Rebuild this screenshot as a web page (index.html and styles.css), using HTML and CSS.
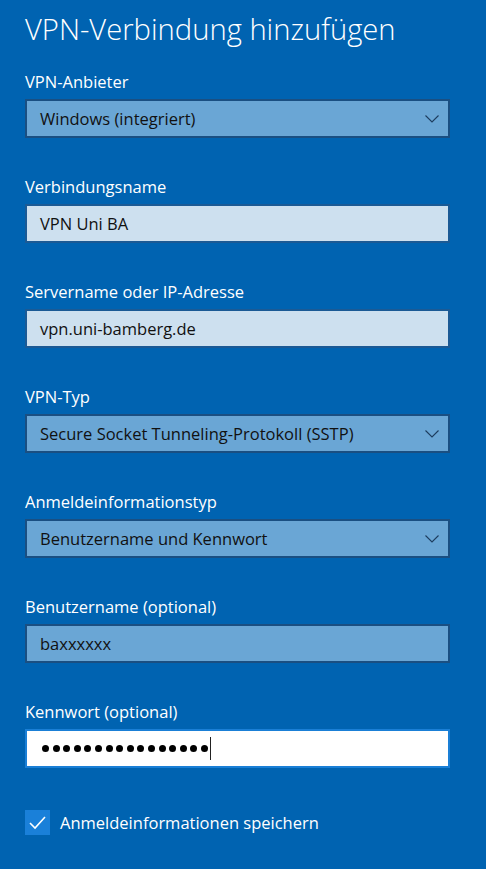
FILE: index.html
```html
<!DOCTYPE html>
<html lang="de">
<head>
<meta charset="utf-8">
<link rel="stylesheet" href="styles.css">
</head>
<body>
<div class="page">
  <h1 class="title">VPN-Verbindung hinzufügen</h1>

  <div class="field">
    <div class="label">VPN-Anbieter</div>
    <div class="box select"><span class="value">Windows (integriert)</span>
      <svg class="chev" width="14" height="8" viewBox="0 0 14 8"><polyline points="0.5,0.5 7,7 13.5,0.5" fill="none" stroke="#1d3c5e" stroke-width="1.1"/></svg>
    </div>
  </div>

  <div class="field">
    <div class="label">Verbindungsname</div>
    <div class="box text"><span class="value">VPN Uni BA</span></div>
  </div>

  <div class="field">
    <div class="label">Servername oder IP-Adresse</div>
    <div class="box text"><span class="value">vpn.uni-bamberg.de</span></div>
  </div>

  <div class="field">
    <div class="label">VPN-Typ</div>
    <div class="box select"><span class="value">Secure Socket Tunneling-Protokoll (SSTP)</span>
      <svg class="chev" width="14" height="8" viewBox="0 0 14 8"><polyline points="0.5,0.5 7,7 13.5,0.5" fill="none" stroke="#1d3c5e" stroke-width="1.1"/></svg>
    </div>
  </div>

  <div class="field">
    <div class="label">Anmeldeinformationstyp</div>
    <div class="box select"><span class="value">Benutzername und Kennwort</span>
      <svg class="chev" width="14" height="8" viewBox="0 0 14 8"><polyline points="0.5,0.5 7,7 13.5,0.5" fill="none" stroke="#1d3c5e" stroke-width="1.1"/></svg>
    </div>
  </div>

  <div class="field">
    <div class="label">Benutzername (optional)</div>
    <div class="box select"><span class="value">baxxxxxx</span></div>
  </div>

  <div class="field">
    <div class="label">Kennwort (optional)</div>
    <div class="box focus"><span class="dots"><i></i><i></i><i></i><i></i><i></i><i></i><i></i><i></i><i></i><i></i><i></i><i></i><i></i><i></i><i></i><i></i></span><span class="caret"></span></div>
  </div>

  <div class="check">
    <span class="checkbox"><svg width="25" height="25" viewBox="0 0 25 25"><polyline points="5,13 10,18 20,7" fill="none" stroke="#ffffff" stroke-width="1.6"/></svg></span>
    <span class="check-label">Anmeldeinformationen speichern</span>
  </div>
</div>
</body>
</html>
```

FILE: styles.css
```css
html, body {
  margin: 0;
  padding: 0;
  background: #0063b1;
}
body {
  width: 486px;
  height: 869px;
  overflow: hidden;
  font-family: "Open Sans", "Noto Sans", sans-serif;
  color: #ffffff;
}
.page {
  padding: 9px 36px 0 25px;
}
.title {
  margin: 0;
  font-size: 29.2px;
  font-weight: 300;
  line-height: 40px;
}
.field {
  margin-top: 23px;
}
.field + .field {
  margin-top: 39px;
}
.label {
  font-size: 16.5px;
  line-height: 20px;
  margin-bottom: 7px;
}
.box {
  box-sizing: border-box;
  height: 39px;
  width: 425px;
  border: 2px solid #1b4d7f;
  display: flex;
  align-items: center;
  padding: 0 8px 0 13px;
  color: #111111;
  font-size: 16.5px;
}
.select {
  background: #6aa6d5;
  border-color: #1a4f82;
}
.text {
  background: #cde0ef;
  border-color: #1b5a95;
}
.focus {
  background: #ffffff;
  border-color: #1a7fd6;
}
.value {
  flex: 1;
  white-space: nowrap;
}
.chev {
  flex: none;
  margin-right: 1px;
}
.dots {
  display: flex;
  gap: 3.6px;
  padding-left: 2px;
}
.dots i {
  display: block;
  width: 7px;
  height: 7px;
  border-radius: 50%;
  background: #000000;
}
.caret {
  display: block;
  width: 1px;
  height: 23px;
  background: #222222;
  margin-left: 2px;
}
.check {
  margin-top: 42px;
  display: flex;
  align-items: center;
  gap: 10px;
}
.checkbox {
  display: block;
  width: 25px;
  height: 25px;
  background: #1a80d9;
}
.checkbox svg {
  display: block;
}
.check-label {
  font-size: 16.5px;
}
```
